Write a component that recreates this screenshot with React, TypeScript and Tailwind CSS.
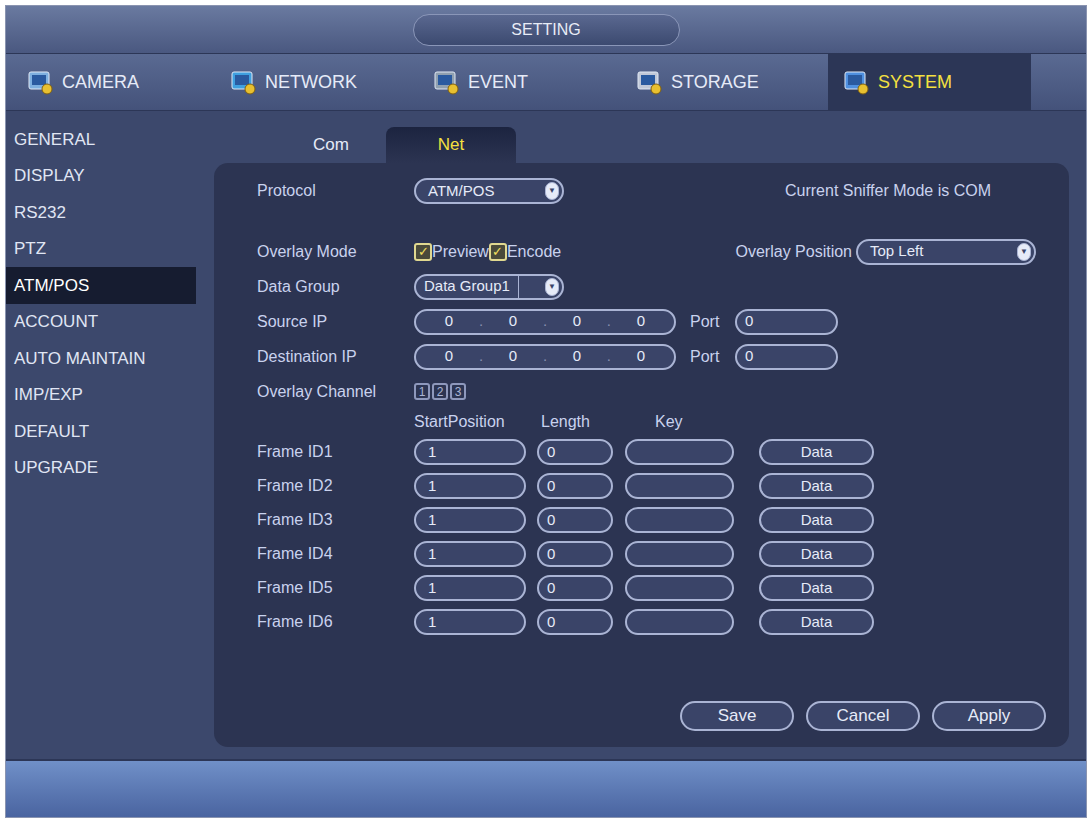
import React from "react";

const txt = "text-[#c9d2ee]";
const field = "h-[26px] rounded-full border-2 border-[#aab4d4] bg-[#3a4468] flex items-center text-[15px] text-[#e6ebf8]";

function Arrow() {
  return (
    <span className="ml-auto mr-[3px] flex h-[18px] w-[14px] items-center justify-center rounded-full border border-[#aab4d4] bg-[#e6ebf8] text-[8px] text-[#3a4468]">▼</span>
  );
}

function Check() {
  return (
    <span className="flex h-[18px] w-[18px] items-center justify-center rounded-[3px] border-2 border-[#e0d890] bg-[#4a4a3a] text-[13px] leading-none text-[#f4e060]">✓</span>
  );
}

function Row({ label, children, h = "h-[35px]" }: { label: string; children?: React.ReactNode; h?: string }) {
  return (
    <div className={`flex items-center ${h}`}>
      <div className={`w-[157px] shrink-0 text-[16px] ${txt}`}>{label}</div>
      {children}
    </div>
  );
}

function Ip() {
  return (
    <div className={`${field} w-[262px] justify-around px-4`}>
      <span>0</span><span className="text-[#8890b0]">.</span><span>0</span><span className="text-[#8890b0]">.</span><span>0</span><span className="text-[#8890b0]">.</span><span>0</span>
    </div>
  );
}

function Port() {
  return (
    <>
      <span className={`ml-[14px] w-[45px] text-[16px] ${txt}`}>Port</span>
      <div className={`${field} w-[103px] pl-2`}>0</div>
    </>
  );
}

const tabs = [
  { name: "CAMERA", color: "#7fb0e0" },
  { name: "NETWORK", color: "#3fa0e0" },
  { name: "EVENT", color: "#90a0b0" },
  { name: "STORAGE", color: "#c0c8d8" },
  { name: "SYSTEM", color: "#4f90e0" },
];

const menu = ["GENERAL", "DISPLAY", "RS232", "PTZ", "ATM/POS", "ACCOUNT", "AUTO MAINTAIN", "IMP/EXP", "DEFAULT", "UPGRADE"];

export default function App() {
  return (
    <div className="h-[823px] w-[1092px] bg-white p-[5px]" style={{ fontFamily: "'Liberation Sans', Arial, sans-serif" }}>
      <div className="flex h-full flex-col border border-[#8a94b0] bg-[#3c486c]">
        <div className="flex h-[47px] items-center justify-center bg-gradient-to-b from-[#6a7aa0] to-[#4a5880]">
          <div className="flex h-[32px] w-[267px] items-center justify-center rounded-full border border-[#8a96b8] bg-gradient-to-b from-[#5a6890] to-[#3c4a70] text-[16px] text-[#e8ecf6]">SETTING</div>
        </div>
        <div className="flex h-[58px] border-y border-[#2c3656] bg-gradient-to-b from-[#5a6a92] to-[#44527a] pl-[10px]">
          {tabs.map((t) => {
            const active = t.name === "SYSTEM";
            return (
              <div key={t.name} className={`flex w-[203px] items-center gap-2 pl-[10px] text-[18px] ${active ? "bg-[#2c3656] text-[#f4e040] pl-[14px]" : "text-[#e6ebf8]"} ${t.name === "CAMERA" ? "w-[190px]" : ""}`}>
                <svg width="28" height="26" viewBox="0 0 28 26">
                  <rect x="3" y="3" width="20" height="17" rx="2" fill={t.color} stroke="#e0e8f4" strokeWidth="1" />
                  <rect x="6" y="6" width="14" height="10" fill="#2a5aa0" />
                  <circle cx="21" cy="20" r="5" fill="#e8c030" stroke="#806010" />
                </svg>
                {t.name}
              </div>
            );
          })}
        </div>
        <div className="flex flex-1">
          <div className="w-[190px] pt-[10px]">
            {menu.map((m) => (
              <div key={m} className={`flex h-[36.5px] items-center pl-[8px] text-[17px] ${m === "ATM/POS" ? "bg-[#161c30] text-white" : "text-[#e0e6f4]"}`}>{m}</div>
            ))}
          </div>
          <div className="ml-[18px] flex-1 pr-[17px] pt-[14px]">
            <div className="flex h-[38px] items-end pl-[62px]">
              <div className="flex h-[36px] w-[110px] items-center justify-center text-[17px] text-[#e6ebf8]">Com</div>
              <div className="flex h-[36px] w-[130px] items-center justify-center rounded-t-[8px] bg-gradient-to-b from-[#1c2440] to-[#2c3452] text-[17px] text-[#f4e040]">Net</div>
            </div>
            <div className="h-[584px] rounded-[14px] bg-[#2c3452] pl-[43px] pr-[23px] pt-[8px]">
              <Row label="Protocol" h="h-[40px]">
                <div className={`${field} w-[150px] pl-3`}>ATM/POS<Arrow /></div>
                <span className={`ml-auto mr-[55px] text-[16px] ${txt}`}>Current Sniffer Mode is COM</span>
              </Row>
              <div className="h-[23px]" />
              <Row label="Overlay Mode">
                <Check /><span className={`text-[16px] ${txt}`}>Preview</span>
                <Check /><span className={`text-[16px] ${txt}`}>Encode</span>
                <span className={`ml-auto text-[16px] ${txt}`}>Overlay Position</span>
                <div className={`${field} ml-1 mr-[10px] w-[180px] pl-3`}>Top Left<Arrow /></div>
              </Row>
              <Row label="Data Group">
                <div className={`${field} w-[150px] pl-2`}>Data Group1<span className="ml-2 h-full border-l border-[#aab4d4]" /><Arrow /></div>
              </Row>
              <Row label="Source IP"><Ip /><Port /></Row>
              <Row label="Destination IP"><Ip /><Port /></Row>
              <Row label="Overlay Channel">
                {["1", "2", "3"].map((n) => (
                  <span key={n} className="mr-[2px] flex h-[17px] w-[16px] items-center justify-center rounded-[3px] border-2 border-[#8e98bc] text-[12px] text-[#aab4d4]">{n}</span>
                ))}
              </Row>
              <div className={`flex h-[26px] items-center text-[16px] ${txt}`}>
                <span className="ml-[157px] w-[127px]">StartPosition</span>
                <span className="w-[82px]">Length</span>
                <span className="ml-[32px]">Key</span>
              </div>
              {[1, 2, 3, 4, 5, 6].map((i) => (
                <Row key={i} label={`Frame ID${i}`} h="h-[34px]">
                  <div className={`${field} w-[112px] pl-3`}>1</div>
                  <div className={`${field} ml-[11px] w-[76px] pl-2`}>0</div>
                  <div className={`${field} ml-[12px] w-[109px]`} />
                  <div className={`${field} ml-[25px] w-[115px] justify-center`}>Data</div>
                </Row>
              ))}
              <div className="flex justify-end gap-[12px] pt-[62px]">
                {["Save", "Cancel", "Apply"].map((b) => (
                  <div key={b} className={`${field} h-[30px] w-[114px] justify-center text-[17px]`}>{b}</div>
                ))}
              </div>
            </div>
          </div>
        </div>
        <div className="h-[58px] border-t-2 border-[#2c3656] bg-gradient-to-b from-[#7090c8] to-[#4a64a0]" />
      </div>
    </div>
  );
}
